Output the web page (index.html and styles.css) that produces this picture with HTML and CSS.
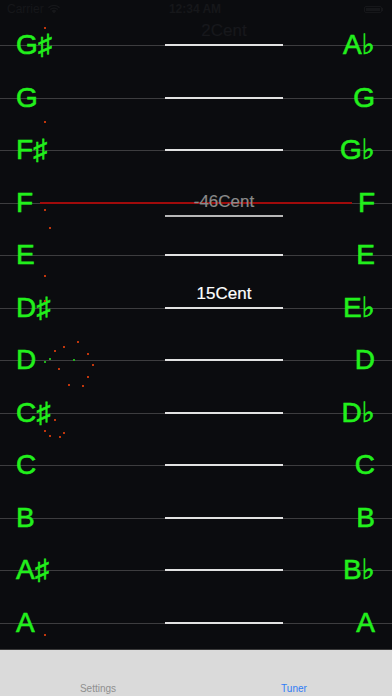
FILE: index.html
```html
<!DOCTYPE html>
<html lang="en">
<head>
<meta charset="utf-8">
<title>Tuner</title>
<link rel="stylesheet" href="styles.css">
</head>
<body>
<div class="app">
  <div class="status">
    <div class="status-left">Carrier
      <svg class="wifi" width="12" height="9" viewBox="0 0 12 9"><path d="M6 8.5 L3.6 5.9 A3.4 3.4 0 0 1 8.4 5.9 Z M1.8 4.1 A6 6 0 0 1 10.2 4.1 L9.3 5 A4.7 4.7 0 0 0 2.7 5 Z M0 2.3 A8.6 8.6 0 0 1 12 2.3 L11.1 3.2 A7.3 7.3 0 0 0 0.9 3.2 Z" fill="currentColor"/></svg>
    </div>
    <div class="status-time">12:34 AM</div>
    <div class="status-right"><span class="battery"><span class="battery-fill"></span></span><span class="battery-tip"></span></div>
  </div>

  <div class="rows">
    <div class="row"><span class="note">G♯</span><div class="mid"><span class="cent cent-dark">2Cent</span><span class="seg"></span></div><span class="note note-r">A♭</span></div>
    <div class="row"><span class="note">G</span><div class="mid"><span class="cent"></span><span class="seg"></span></div><span class="note note-r">G</span></div>
    <div class="row"><span class="note">F♯</span><div class="mid"><span class="cent"></span><span class="seg"></span></div><span class="note note-r">G♭</span></div>
    <div class="row row-active"><span class="note">F</span><div class="mid mid-low"><span class="cent cent-grey">-46Cent</span><span class="seg seg-grey"></span></div><span class="note note-r">F</span></div>
    <div class="row"><span class="note">E</span><div class="mid"><span class="cent"></span><span class="seg"></span></div><span class="note note-r">E</span></div>
    <div class="row"><span class="note">D♯</span><div class="mid"><span class="cent cent-white">15Cent</span><span class="seg"></span></div><span class="note note-r">E♭</span></div>
    <div class="row"><span class="note">D</span><div class="mid"><span class="cent"></span><span class="seg"></span></div><span class="note note-r">D</span></div>
    <div class="row"><span class="note">C♯</span><div class="mid"><span class="cent"></span><span class="seg"></span></div><span class="note note-r">D♭</span></div>
    <div class="row"><span class="note">C</span><div class="mid"><span class="cent"></span><span class="seg"></span></div><span class="note note-r">C</span></div>
    <div class="row"><span class="note">B</span><div class="mid"><span class="cent"></span><span class="seg"></span></div><span class="note note-r">B</span></div>
    <div class="row"><span class="note">A♯</span><div class="mid"><span class="cent"></span><span class="seg"></span></div><span class="note note-r">B♭</span></div>
    <div class="row"><span class="note">A</span><div class="mid"><span class="cent"></span><span class="seg"></span></div><span class="note note-r">A</span></div>

    <div class="dots">
      <span class="dot" style="left:44px;top:8px"></span>
      <span class="dot" style="left:44px;top:102px"></span>
      <span class="dot" style="left:44px;top:190px"></span>
      <span class="dot" style="left:49px;top:208px"></span>
      <span class="dot" style="left:44px;top:256px"></span>
      <span class="dot" style="left:44px;top:281px"></span>
      <span class="dot" style="left:77px;top:322px"></span>
      <span class="dot" style="left:63px;top:327px"></span>
      <span class="dot" style="left:54px;top:331px"></span>
      <span class="dot" style="left:87px;top:334px"></span>
      <span class="dot dot-g" style="left:49px;top:339px"></span>
      <span class="dot dot-g" style="left:44px;top:342px"></span>
      <span class="dot dot-g" style="left:73px;top:340px"></span>
      <span class="dot" style="left:92px;top:345px"></span>
      <span class="dot" style="left:58px;top:349px"></span>
      <span class="dot" style="left:87px;top:357px"></span>
      <span class="dot" style="left:68px;top:365px"></span>
      <span class="dot" style="left:82px;top:366px"></span>
      <span class="dot" style="left:54px;top:400px"></span>
      <span class="dot" style="left:44px;top:411px"></span>
      <span class="dot" style="left:63px;top:413px"></span>
      <span class="dot" style="left:49px;top:416px"></span>
      <span class="dot" style="left:59px;top:417px"></span>
      <span class="dot" style="left:44px;top:615px"></span>
    </div>
  </div>

  <div class="tabbar">
    <div class="tab">Settings</div>
    <div class="tab tab-on">Tuner</div>
  </div>
</div>
</body>
</html>
```

FILE: styles.css
```css
html, body {
  margin: 0;
  padding: 0;
  background: #0b0c0f;
}
body {
  width: 392px;
  height: 696px;
  overflow: hidden;
  font-family: "Liberation Sans", Arial, "DejaVu Sans", sans-serif;
}
.app {
  display: flex;
  flex-direction: column;
  height: 696px;
}
.status {
  height: 19px;
  flex: none;
  display: grid;
  grid-template-columns: 1fr auto 1fr;
  align-items: center;
  padding: 0 9px 0 7px;
  color: #16171a;
  font-size: 12px;
  line-height: 19px;
}
.status-left {
  display: flex;
  align-items: center;
  gap: 4px;
}
.wifi { display: block; }
.status-time {
  font-weight: bold;
  text-align: center;
}
.status-right {
  display: flex;
  justify-content: flex-end;
  align-items: center;
}
.battery {
  width: 18px;
  height: 7px;
  border: 1px solid #16171a;
  border-radius: 2px;
  padding: 1px;
  box-sizing: border-box;
  display: flex;
}
.battery-fill {
  flex: 1;
  background: #16171a;
}
.battery-tip {
  width: 1.5px;
  height: 3px;
  background: #16171a;
}
.rows {
  position: relative;
  flex: none;
  display: flex;
  flex-direction: column;
}
.row {
  height: 52.5px;
  display: grid;
  grid-template-columns: 165px 118px 1fr;
  align-items: center;
  background: linear-gradient(#3d3d3f, #3d3d3f) no-repeat 0 26px / 100% 1px;
}
.row-active {
  background:
    linear-gradient(#a00b0b, #a00b0b) no-repeat 40px 25px / 312px 2px,
    linear-gradient(#3d3d3f, #3d3d3f) no-repeat 0 26px / 100% 1px;
}
.note {
  color: #22f01c;
  font-size: 28px;
  line-height: 32px;
  padding-left: 16px;
  white-space: nowrap;
  -webkit-text-stroke: 0.6px #22f01c;
}
.note-r {
  justify-self: end;
  padding-left: 0;
  padding-right: 17px;
}
.mid {
  height: 52.5px;
  display: grid;
  grid-template-rows: 1fr auto 1fr;
}
.mid-low {
  transform: translateY(13px);
}
.cent {
  align-self: end;
  justify-self: center;
  font-size: 17px;
  line-height: 20px;
  margin-bottom: 3px;
  white-space: nowrap;
  -webkit-text-stroke: 0.2px currentColor;
}
.cent-dark { color: #17181c; }
.cent-grey { color: #8a8a8a; }
.cent-white { color: #ffffff; }
.seg {
  height: 2px;
  background: #e2e2e2;
}
.seg-grey { background: #b8b8b8; }
.dots {
  position: absolute;
  inset: 0;
  pointer-events: none;
}
.dot {
  position: absolute;
  width: 2px;
  height: 2px;
  background: #c0360c;
}
.dot-g { background: #1fb01c; }
.tabbar {
  flex: 1;
  display: grid;
  grid-template-columns: 1fr 1fr;
  background: #dadada;
  border-top: 1px solid #3a3a3a;
}
.tab {
  align-self: end;
  text-align: center;
  font-size: 10px;
  line-height: 12px;
  padding-bottom: 1px;
  color: #8f8f8f;
}
.tab-on { color: #2f7df6; }
```
